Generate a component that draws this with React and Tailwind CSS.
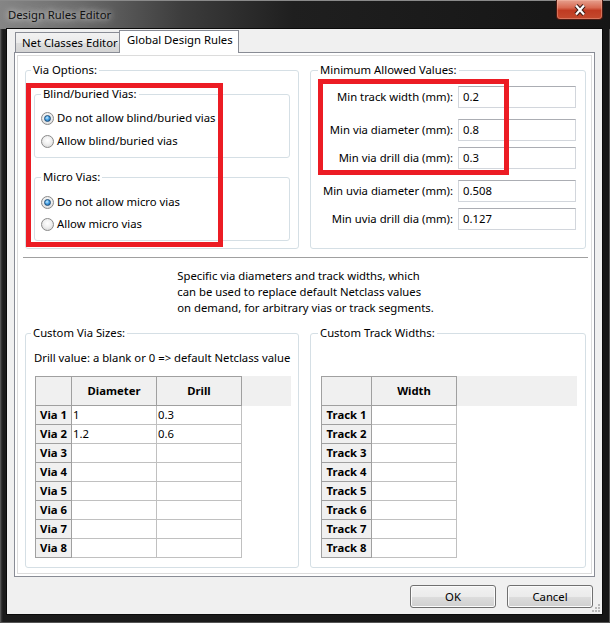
import React from "react";

function Radio({ checked, label }) {
  return (
    <div className="flex items-center h-[16px]">
      <span className="w-[13px] h-[13px] shrink-0 rounded-full border border-[#8a8a8a] bg-[radial-gradient(circle_at_50%_40%,#ffffff_0%,#f0f0f0_45%,#cfcfcf_100%)] flex items-center justify-center">
        {checked && (
          <span className="w-[7px] h-[7px] rounded-full border border-[#1b4c78] bg-[radial-gradient(circle_at_40%_35%,#c8ecff_0%,#4aa3e6_45%,#165a96_100%)]" />
        )}
      </span>
      <span className="ml-[3px]">{label}</span>
    </div>
  );
}

function Group({ title, className, legendClass, children }) {
  return (
    <fieldset className={`min-w-0 m-0 p-0 border border-[#d5dfe5] rounded-[3px] ${className}`}>
      <legend className={`px-[2px] leading-[16px] ${legendClass}`}>{title}</legend>
      {children}
    </fieldset>
  );
}

function Field({ label, value, mt }) {
  return (
    <div className={`flex justify-end items-center gap-[5px] pr-[9px] ${mt}`}>
      <span className="leading-[16px]">{label}</span>
      <div className="w-[118px] h-[22px] bg-white border border-[#d2d6dc] border-t-[#abadb3] flex items-center pl-[4px]">
        {value}
      </div>
    </div>
  );
}

function Grid({ labelW, fillerW, headers, rows }) {
  return (
    <div className="flex flex-col">
      <div className="flex">
        <div className={`h-[30px] bg-[#f0f0f0] border border-[#a0a0a0] ${labelW}`} />
        {headers.map((h) => (
          <div
            key={h}
            className="w-[85px] h-[30px] bg-[#f0f0f0] border-t border-r border-b border-[#a0a0a0] flex items-center justify-center font-bold"
          >
            {h}
          </div>
        ))}
        <div className={`h-[30px] bg-[#f0f0f0] ${fillerW}`} />
      </div>
      {rows.map((r) => (
        <div className="flex" key={r.label}>
          <div
            className={`h-[19px] bg-[#f0f0f0] border-l border-r border-b border-[#a0a0a0] flex items-center justify-center font-bold ${labelW}`}
          >
            {r.label}
          </div>
          {r.vals.map((v, j) => (
            <div
              key={j}
              className="w-[85px] h-[19px] bg-white border-r border-b border-[#c0c0c0] flex items-center pl-[1px]"
            >
              {v}
            </div>
          ))}
        </div>
      ))}
    </div>
  );
}

export default function App() {
  const viaRows = [
    { label: "Via 1", vals: ["1", "0.3"] },
    { label: "Via 2", vals: ["1.2", "0.6"] },
    { label: "Via 3", vals: ["", ""] },
    { label: "Via 4", vals: ["", ""] },
    { label: "Via 5", vals: ["", ""] },
    { label: "Via 6", vals: ["", ""] },
    { label: "Via 7", vals: ["", ""] },
    { label: "Via 8", vals: ["", ""] },
  ];
  const trackRows = [1, 2, 3, 4, 5, 6, 7, 8].map((n) => ({ label: `Track ${n}`, vals: [""] }));

  return (
    <div className="relative w-[610px] h-[623px] overflow-hidden flex flex-col font-['Noto_Sans',sans-serif] text-[11.3px] text-black bg-[linear-gradient(90deg,#4a4a4a_0px,#1c1c1c_3px,#161616_100%)] shadow-[inset_0_0_0_1px_#555]">
      {/* Title bar */}
      <div className="h-[29px] shrink-0 flex justify-between items-start bg-[linear-gradient(90deg,#858585_0%,#6e6e6e_12%,#3c3c3c_30%,#1f1f1f_48%,#151515_100%)] shadow-[inset_0_1px_0_#8a8a8a]">
        <div className="pl-[8px] pt-[7px] leading-[16px] text-[#111] [text-shadow:0_0_6px_rgba(255,255,255,0.85),0_0_12px_rgba(255,255,255,0.55)]">
          Design Rules Editor
        </div>
        <div className="w-[47px] h-[20px] mr-[7px] rounded-b-[4px] border border-t-0 border-[#4a1a12] bg-[linear-gradient(180deg,#e6a08e_0%,#d86a52_40%,#c03b22_55%,#c44a2e_100%)] shadow-[inset_0_0_0_1px_rgba(255,200,180,0.35)] flex items-center justify-center">
          <svg width="14" height="12" viewBox="0 0 14 12">
            <path d="M3 1.5 L11 10.5 M11 1.5 L3 10.5" stroke="#3b1c16" strokeWidth="4.2" />
            <path d="M3 1.5 L11 10.5 M11 1.5 L3 10.5" stroke="#ffffff" strokeWidth="2.2" />
          </svg>
        </div>
      </div>

      {/* Client area */}
      <div className="relative ml-[7px] mr-[8px] h-[585px] shrink-0 bg-[#f0f0f0] shadow-[0_0_0_1px_#0a0a0a]">
        {/* Tabs */}
        <div className="flex items-end h-[23px] pl-[8px]">
          <div className="w-[104px] h-[20px] border-l border-t border-[#898c95] bg-[linear-gradient(180deg,#f2f2f2_0%,#ebebeb_50%,#dddddd_51%,#d4d4d4_100%)] pl-[6px] pt-[2px] leading-[16px] whitespace-nowrap">
            Net Classes Editor
          </div>
          <div className="relative z-10 -mb-px w-[120px] h-[23px] border-l border-t border-r border-[#898c95] bg-white pl-[7px] pt-[1px] leading-[16px] whitespace-nowrap">
            Global Design Rules
          </div>
        </div>

        {/* Page */}
        <div className="ml-[7px] w-[581px] h-[525px] border border-[#898c95] bg-white p-[2px]">
          <div className="relative h-full border border-[#dcdcdc] pt-[6px] pl-[7px] pr-[5px] pb-[5px] flex flex-col">
            {/* Top row */}
            <div className="flex gap-[11px]">
              <Group title="Via Options:" className="w-[274px]" legendClass="ml-[5px]">
                <div className="px-[8px] pt-[8px] pb-[7px] flex flex-col">
                  <Group title="Blind/buried Vias:" className="w-full" legendClass="ml-[6px]">
                    <div className="pl-[6px] pt-[8px] pb-[8px] flex flex-col gap-[7px]">
                      <Radio checked label="Do not allow blind/buried vias" />
                      <Radio label="Allow blind/buried vias" />
                    </div>
                  </Group>
                  <Group title="Micro Vias:" className="w-full mt-[11px]" legendClass="ml-[6px]">
                    <div className="pl-[6px] pt-[9px] pb-[8px] flex flex-col gap-[6px]">
                      <Radio checked label="Do not allow micro vias" />
                      <Radio label="Allow micro vias" />
                    </div>
                  </Group>
                </div>
              </Group>
              <Group title="Minimum Allowed Values:" className="w-[276px]" legendClass="ml-[7px]">
                <div className="flex flex-col">
                  <Field label="Min track width (mm):" value="0.2" mt="mt-[8px]" />
                  <Field label="Min via diameter (mm):" value="0.8" mt="mt-[11px]" />
                  <Field label="Min via drill dia (mm):" value="0.3" mt="mt-[6px]" />
                  <Field label="Min uvia diameter (mm):" value="0.508" mt="mt-[11px]" />
                  <Field label="Min uvia drill dia (mm):" value="0.127" mt="mt-[6px]" />
                </div>
              </Group>
            </div>

            {/* Separator */}
            <div className="mt-[8px] -ml-[2px] -mr-[2px] h-px bg-[#a0a0a0]" />

            {/* Description */}
            <div className="mt-[10px] flex justify-center">
              <p className="leading-[16px]">
                Specific via diameters and track widths, which
                <br />
                can be used to replace default Netclass values
                <br />
                on demand, for arbitrary vias or track segments.
              </p>
            </div>

            {/* Bottom row */}
            <div className="mt-[9px] flex gap-[11px]">
              <Group title="Custom Via Sizes:" className="w-[274px]" legendClass="ml-[5px]">
                <div className="pl-[8px] pt-[9px] pb-[9px]">
                  <div className="leading-[16px] whitespace-nowrap">
                    Drill value: a blank or 0 =&gt; default Netclass value
                  </div>
                  <div className="ml-[1px] mt-[10px]">
                    <Grid labelW="w-[37px]" fillerW="w-[49px]" headers={["Diameter", "Drill"]} rows={viaRows} />
                  </div>
                </div>
              </Group>
              <Group title="Custom Track Widths:" className="w-[276px]" legendClass="ml-[7px]">
                <div className="pl-[10px] pt-[35px]">
                  <Grid labelW="w-[51px]" fillerW="w-[120px]" headers={["Width"]} rows={trackRows} />
                </div>
              </Group>
            </div>

            {/* Annotation boxes */}
            <div className="absolute left-[8px] top-[27px] w-[197px] h-[164px] border-[5px] border-[#ec1c24]" />
            <div className="absolute left-[300px] top-[23px] w-[191px] h-[96px] border-[5px] border-[#ec1c24]" />
          </div>
        </div>

        {/* Buttons */}
        <div className="mt-[8px] flex justify-end gap-[11px] pr-[9px]">
          <div className="w-[86px] h-[23px] rounded-[3px] border border-[#707070] bg-[linear-gradient(180deg,#f2f2f2_0%,#ebebeb_50%,#dddddd_51%,#cfcfcf_100%)] shadow-[inset_0_0_0_1px_#fbfbfb] flex items-center justify-center leading-[16px]">
            OK
          </div>
          <div className="w-[86px] h-[23px] rounded-[3px] border border-[#707070] bg-[linear-gradient(180deg,#f2f2f2_0%,#ebebeb_50%,#dddddd_51%,#cfcfcf_100%)] shadow-[inset_0_0_0_1px_#fbfbfb] flex items-center justify-center leading-[16px]">
            Cancel
          </div>
        </div>

        {/* Resize grip */}
        <svg className="absolute right-[1px] bottom-[1px]" width="11" height="11" viewBox="0 0 11 11">
          {[
            [8, 2],
            [5, 5],
            [8, 5],
            [2, 8],
            [5, 8],
            [8, 8],
          ].map(([x, y]) => (
            <rect key={`${x}-${y}`} x={x} y={y} width="2" height="2" fill="#b8b8b8" />
          ))}
        </svg>
      </div>
    </div>
  );
}
